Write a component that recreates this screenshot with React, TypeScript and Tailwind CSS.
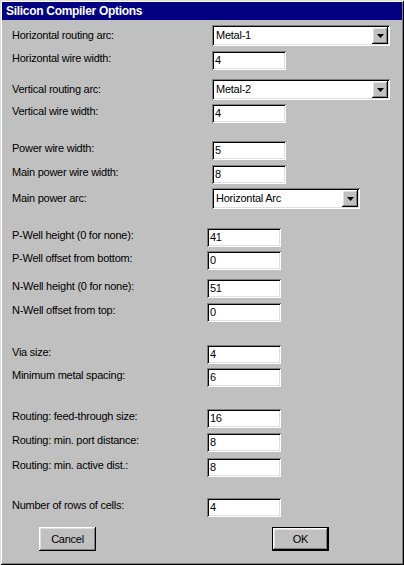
import React from "react";

type Row = {
  label: string;
  kind: "dd" | "in";
  value: string;
  mt: string;
  lw: string;
  cw: string;
};

const rows: Row[] = [
  { label: "Horizontal routing arc:", kind: "dd", value: "Metal-1", mt: "mt-[5px]", lw: "w-[200px]", cw: "w-[178px]" },
  { label: "Horizontal wire width:", kind: "in", value: "4", mt: "mt-[5px]", lw: "w-[200px]", cw: "w-[74px]" },
  { label: "Vertical routing arc:", kind: "dd", value: "Metal-2", mt: "mt-[9px]", lw: "w-[200px]", cw: "w-[178px]" },
  { label: "Vertical wire width:", kind: "in", value: "4", mt: "mt-[4px]", lw: "w-[200px]", cw: "w-[74px]" },
  { label: "Power wire width:", kind: "in", value: "5", mt: "mt-[18px]", lw: "w-[200px]", cw: "w-[74px]" },
  { label: "Main power wire width:", kind: "in", value: "8", mt: "mt-[5px]", lw: "w-[200px]", cw: "w-[74px]" },
  { label: "Main power arc:", kind: "dd", value: "Horizontal Arc", mt: "mt-[4px]", lw: "w-[200px]", cw: "w-[148px]" },
  { label: "P-Well height (0 for none):", kind: "in", value: "41", mt: "mt-[19px]", lw: "w-[195px]", cw: "w-[74px]" },
  { label: "P-Well offset from bottom:", kind: "in", value: "0", mt: "mt-[4px]", lw: "w-[195px]", cw: "w-[74px]" },
  { label: "N-Well height (0 for none):", kind: "in", value: "51", mt: "mt-[9px]", lw: "w-[195px]", cw: "w-[74px]" },
  { label: "N-Well offset from top:", kind: "in", value: "0", mt: "mt-[5px]", lw: "w-[195px]", cw: "w-[74px]" },
  { label: "Via size:", kind: "in", value: "4", mt: "mt-[23px]", lw: "w-[195px]", cw: "w-[74px]" },
  { label: "Minimum metal spacing:", kind: "in", value: "6", mt: "mt-[4px]", lw: "w-[195px]", cw: "w-[74px]" },
  { label: "Routing: feed-through size:", kind: "in", value: "16", mt: "mt-[22px]", lw: "w-[195px]", cw: "w-[74px]" },
  { label: "Routing: min. port distance:", kind: "in", value: "8", mt: "mt-[5px]", lw: "w-[195px]", cw: "w-[74px]" },
  { label: "Routing: min. active dist.:", kind: "in", value: "8", mt: "mt-[6px]", lw: "w-[195px]", cw: "w-[74px]" },
  { label: "Number of rows of cells:", kind: "in", value: "4", mt: "mt-[21px]", lw: "w-[195px]", cw: "w-[74px]" },
];

const sunken =
  "bg-white shadow-[inset_1px_1px_0_#808080,inset_-1px_-1px_0_#ffffff,inset_2px_2px_0_#000000,inset_-2px_-2px_0_#dfdfdf]";
const raised =
  "bg-[#c0c0c0] shadow-[inset_-1px_-1px_0_#000000,inset_1px_1px_0_#ffffff,inset_-2px_-2px_0_#808080,inset_2px_2px_0_#dfdfdf]";

function Dropdown({ value, cw }: { value: string; cw: string }) {
  return (
    <div className={`${cw} h-[21px] ${sunken} flex items-center justify-between pl-[4px] pr-[2px]`}>
      <span className="text-[11px] tracking-[-0.25px] text-black leading-none">{value}</span>
      <div className={`w-[16px] h-[17px] ${raised} flex items-center justify-center`}>
        <svg width="7" height="4" viewBox="0 0 7 4">
          <path d="M0 0H7L3.5 4Z" fill="#000" />
        </svg>
      </div>
    </div>
  );
}

function Input({ value, cw }: { value: string; cw: string }) {
  return (
    <div className={`${cw} h-[19px] ${sunken} flex items-center pl-[3px]`}>
      <span className="text-[11px] tracking-[-0.25px] text-black leading-none">{value}</span>
    </div>
  );
}

export default function App() {
  return (
    <div
      className="w-[404px] h-[565px] bg-[#c0c0c0] flex flex-col pt-[2px] px-[2px] shadow-[inset_1px_1px_0_#dfdfdf,inset_-1px_-1px_0_#000000,inset_2px_2px_0_#ffffff,inset_-2px_-2px_0_#808080]"
      style={{ fontFamily: '"Liberation Sans", Arial, sans-serif' }}
    >
      <div className="h-[18px] bg-[#000080] flex items-center pl-[4px]">
        <span className="text-white text-[12px] font-bold tracking-[-0.3px] leading-none">
          Silicon Compiler Options
        </span>
      </div>
      {rows.map((r, i) => (
        <div key={i} className={`${r.mt} flex items-center pl-[10px]`}>
          <div className={`${r.lw} text-[11px] tracking-[-0.25px] text-black leading-none ${r.kind === "in" ? "pb-[5px]" : "pb-0"}`}>
            {r.label}
          </div>
          {r.kind === "dd" ? <Dropdown value={r.value} cw={r.cw} /> : <Input value={r.value} cw={r.cw} />}
        </div>
      ))}
      <div className="mt-[10px] flex">
        <div className="ml-[37px] w-[57px] h-[24px] bg-[#c0c0c0] shadow-[inset_-1px_-1px_0_#000000,inset_1px_1px_0_#ffffff,inset_-2px_-2px_0_#808080,inset_2px_2px_0_#dfdfdf] flex items-center justify-center">
          <span className="text-[11px] tracking-[-0.25px] text-black leading-none">Cancel</span>
        </div>
        <div className="ml-[176px] w-[57px] h-[24px] bg-[#c0c0c0] border border-black shadow-[inset_-1px_-1px_0_#000000,inset_1px_1px_0_#ffffff,inset_-2px_-2px_0_#808080,inset_2px_2px_0_#dfdfdf] flex items-center justify-center">
          <span className="text-[11px] tracking-[-0.25px] text-black leading-none">OK</span>
        </div>
      </div>
    </div>
  );
}
